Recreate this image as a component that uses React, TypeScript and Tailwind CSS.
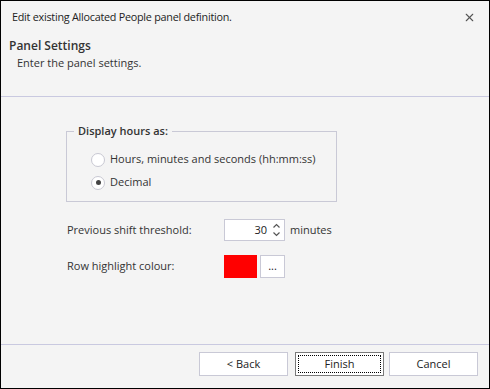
import React from 'react';
import { X } from 'lucide-react';

const font = { fontFamily: '"Open Sans", "Noto Sans", sans-serif' };

const Radio: React.FC<{ checked?: boolean; label: string }> = ({ checked, label }) => (
  <div className="flex items-center h-[23px]">
    <div className="w-[14px] h-[14px] rounded-full border border-[#c8c8d2] bg-white flex items-center justify-center">
      {checked && <div className="w-[5px] h-[5px] rounded-full bg-[#444]" />}
    </div>
    <span className="ml-[5px] text-[11px] text-[#333]">{label}</span>
  </div>
);

export default function App() {
  return (
    <div className="w-[490px] h-[389px] border border-black bg-[#f4f4f4] flex flex-col" style={font}>
      {/* Header */}
      <div className="h-[96px] border-b border-[#c9c9e0] flex flex-col">
        <div className="flex items-center justify-between pl-[11px] pr-[13px] h-[32px]">
          <span className="text-[10.8px] tracking-[-0.25px] text-[#222]">
            Edit existing Allocated People panel definition.
          </span>
          <X size={13} strokeWidth={2} className="text-[#555]" />
        </div>
        <div className="pl-[8px] mt-[5px] text-[12px] font-semibold text-[#333] leading-[16px]">Panel Settings</div>
        <div className="pl-[16px] mt-[1px] text-[11px] text-[#333] leading-[15px]">Enter the panel settings.</div>
      </div>

      {/* Body */}
      <div className="flex-1 pl-[65px] pt-[34px]">
        <div className="relative w-[271px] h-[71px] border border-[#c9c9d6] pl-[24px] pt-[16px]">
          <span className="absolute -top-[9px] left-[7px] px-[4px] bg-[#f4f4f4] text-[11px] font-semibold text-[#333] leading-[16px]">
            Display hours as:
          </span>
          <Radio label="Hours, minutes and seconds (hh:mm:ss)" />
          <Radio checked label="Decimal" />
        </div>

        <div className="flex items-center mt-[17px] h-[22px]">
          <span className="w-[158px] pl-[1px] text-[11px] text-[#333]">Previous shift threshold:</span>
          <div className="w-[61px] h-[22px] border border-[#c9c9d6] bg-white flex items-center justify-end pr-[3px]">
            <span className="text-[11px] text-[#222] mr-[5px]">30</span>
            <svg width="9" height="16" viewBox="0 0 9 16" className="text-[#555]">
              <path d="M1.5 5.5 L4.5 2.5 L7.5 5.5" fill="none" stroke="currentColor" strokeWidth="1.2" />
              <path d="M1.5 10.5 L4.5 13.5 L7.5 10.5" fill="none" stroke="currentColor" strokeWidth="1.2" />
            </svg>
          </div>
          <span className="ml-[5px] text-[11px] text-[#333]">minutes</span>
        </div>

        <div className="flex items-center mt-[14px] h-[23px]">
          <span className="w-[158px] pl-[1px] text-[11px] text-[#333]">Row highlight colour:</span>
          <div className="w-[33px] h-[23px] bg-[#ff0000]" />
          <div className="ml-[3px] w-[25px] h-[23px] border border-[#c9c9d6] bg-white flex items-center justify-center text-[11px] text-[#222] leading-none pb-[3px]">
            ...
          </div>
        </div>
      </div>

      {/* Footer */}
      <div className="h-[44px] border-t border-[#c9c9e0] flex items-start justify-end pr-[11px] pt-[7px]">
        <button className="w-[89px] h-[24px] border border-[#c9c9d6] bg-white text-[11px] text-[#222]">&lt; Back</button>
        <button className="w-[89px] h-[24px] border border-[#7a7a7a] bg-white text-[11px] text-[#222] p-[2px] ml-[7px]">
          <div className="w-full h-full border border-dotted border-black flex items-center justify-center">Finish</div>
        </button>
        <button className="w-[89px] h-[24px] ml-[5px] border border-[#c9c9d6] bg-white text-[11px] text-[#222]">Cancel</button>
      </div>
    </div>
  );
}
